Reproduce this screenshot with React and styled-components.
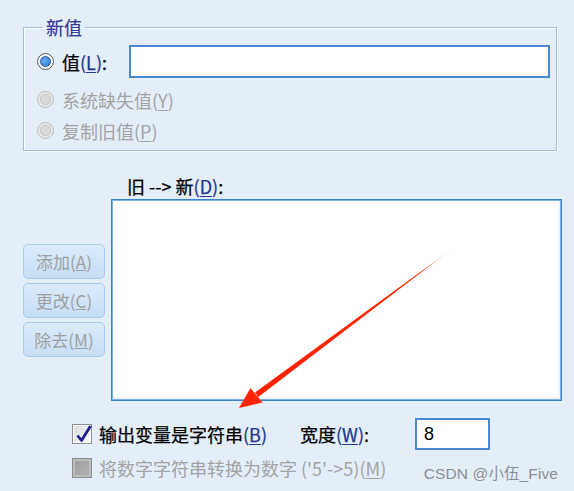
import React from "react";
import styled, { createGlobalStyle } from "styled-components";

const Global = createGlobalStyle`
  html, body { margin: 0; padding: 0; background: #e3eef9; }
  * { box-sizing: border-box; }
`;

const Page = styled.div`
  position: relative;
  width: 574px;
  height: 491px;
  overflow: hidden;
  display: flex;
  flex-direction: column;
  background: #e3eef9;
  font-family: "Noto Sans CJK SC", "Noto Sans", sans-serif;
  font-size: 18px;
  color: #000;
`;

const Group = styled.fieldset`
  margin: 15px 0 0 23px;
  width: 534px;
  min-inline-size: 0;
  padding: 6px 0 4px 13px;
  border: 1px solid #9dbde3;
  box-shadow: inset 1px 1px 0 #fff, 1px 1px 0 #fff;
`;

const Legend = styled.legend`
  margin-left: 6px;
  padding: 0 3px;
  line-height: 24px;
  font-size: 18px;
  color: #34399a;
  -webkit-text-stroke: 0.2px #34399a;
`;

const OptRow = styled.div`
  display: flex;
  align-items: center;
  height: ${(p) => p.$h || 31}px;
  margin-top: ${(p) => p.$mt || 0}px;
`;

const Radio = styled.span`
  flex: none;
  width: 17px;
  height: 17px;
  border-radius: 50%;
  border: 1.5px solid ${(p) => (p.$disabled ? "#bdbdbd" : "#595959")};
  background: ${(p) => (p.$disabled ? "#e6e6e6" : "#f7f7f7")};
  display: grid;
  place-items: center;
  &::after {
    content: "";
    width: 9px;
    height: 9px;
    border-radius: 50%;
    border: 1px solid ${(p) => (p.$checked ? "#2a5e9c" : "#c4c4c4")};
    background: ${(p) =>
      p.$checked
        ? "radial-gradient(circle at 40% 40%, #6cb0f2, #2476d2)"
        : "#dadada"};
  }
`;

const Text = styled.span`
  margin-left: ${(p) => p.$ml ?? 8}px;
  line-height: 24px;
  white-space: nowrap;
  color: ${(p) => (p.$disabled ? "#a3a3a3" : "#000")};
  -webkit-text-stroke: ${(p) => (p.$disabled ? "0" : "0.25px #000")};
  width: ${(p) => (p.$w ? `${p.$w}px` : "auto")};
  flex: none;
`;

const Key = styled.span`
  color: ${(p) => (p.$disabled ? "#a3a3a3" : "#24378a")};
  -webkit-text-stroke: ${(p) => (p.$disabled ? "0" : "0.25px #24378a")};
  & u { text-underline-offset: 2px; text-decoration-thickness: 1px; }
`;

const Field = styled.div`
  flex: none;
  width: ${(p) => p.$w}px;
  height: ${(p) => p.$h}px;
  margin-left: ${(p) => p.$ml || 0}px;
  background: #fff;
  border: 2px solid #4a89d2;
  display: flex;
  align-items: center;
  padding-left: 7px;
  font-family: "Liberation Sans", sans-serif;
  font-size: 18px;
`;

const Middle = styled.div`
  display: grid;
  grid-template-columns: 82px 451px;
  grid-template-rows: 24px 202px;
  column-gap: 6px;
  row-gap: 1px;
  margin: 23px 0 0 23px;
`;

const ListLabel = styled.div`
  grid-column: 2;
  grid-row: 1;
  padding-left: 16px;
  line-height: 24px;
  -webkit-text-stroke: 0.25px #000;
`;

const Buttons = styled.div`
  grid-column: 1;
  grid-row: 2;
  align-self: center;
  display: flex;
  flex-direction: column;
  gap: 4px;
`;

const Btn = styled.div`
  height: 35px;
  border: 1px solid #a8cbee;
  border-radius: 5px;
  background: linear-gradient(#dcebfb, #c6def6);
  color: #9f9f9f;
  font-size: 17px;
  display: flex;
  align-items: center;
  justify-content: center;
`;

const ListBox = styled.div`
  grid-column: 2;
  grid-row: 2;
  background: #fff;
  border: 1px solid #3e7fcf;
  box-shadow: inset 0 0 0 1px #7fb0e6, inset -2px -2px 0 1px #eef4fb;
`;

const Bottom = styled.div`
  display: flex;
  flex-direction: column;
  gap: 6px;
  margin: 17px 0 0 72px;
`;

const CheckRow = styled.div`
  display: flex;
  align-items: center;
  height: ${(p) => p.$h}px;
`;

const Check = styled.span`
  flex: none;
  width: 20px;
  height: 20px;
  position: relative;
  border: 1px solid #8d8d8d;
  background: ${(p) =>
    p.$disabled
      ? "linear-gradient(135deg, #9c9c9c, #b4b4b4)"
      : "linear-gradient(135deg, #d9d9d9, #fbfbfb)"};
  box-shadow: ${(p) =>
    p.$disabled ? "inset 0 0 0 2px #bdbdbd" : "inset 0 0 0 1px #fff"};
  & svg {
    position: absolute;
    left: 1px;
    top: -2px;
  }
`;

const Watermark = styled.div`
  position: absolute;
  right: 16px;
  bottom: 8px;
  font-family: "Liberation Sans", "Noto Sans CJK SC", sans-serif;
  font-size: 15.5px;
  color: #8c8f94;
  letter-spacing: 0.1px;
`;

const Overlay = styled.svg`
  position: absolute;
  left: 0;
  top: 0;
  pointer-events: none;
`;

export default function App() {
  return (
    <Page>
      <Global />
      <Group>
        <Legend>新值</Legend>
        <OptRow $h={33}>
          <Radio $checked />
          <Text $w={67}>
            值<Key>(<u>L</u>)</Key>:
          </Text>
          <Field $w={421} $h={33} />
        </OptRow>
        <OptRow $mt={6}>
          <Radio $disabled />
          <Text $disabled>
            系统缺失值<Key $disabled>(<u>Y</u>)</Key>
          </Text>
        </OptRow>
        <OptRow>
          <Radio $disabled />
          <Text $disabled>
            复制旧值<Key $disabled>(<u>P</u>)</Key>
          </Text>
        </OptRow>
      </Group>

      <Middle>
        <ListLabel>
          旧 --&gt; 新<Key>(<u>D</u>)</Key>:
        </ListLabel>
        <Buttons>
          <Btn>
            添加(<u>A</u>)
          </Btn>
          <Btn>
            更改(<u>C</u>)
          </Btn>
          <Btn>
            除去(<u>M</u>)
          </Btn>
        </Buttons>
        <ListBox />
      </Middle>

      <Bottom>
        <CheckRow $h={32}>
          <Check>
            <svg width="20" height="22" viewBox="0 0 20 22">
              <path
                d="M3.5 12.5 L7.5 17.5 L16.5 3"
                fill="none"
                stroke="#1d1f8f"
                strokeWidth="2.8"
                strokeLinejoin="round"
              />
            </svg>
          </Check>
          <Text $ml={7} $w={201}>
            输出变量是字符串<Key>(<u>B</u>)</Key>
          </Text>
          <Text $ml={0} $w={115}>
            宽度<Key>(<u>W</u>)</Key>:
          </Text>
          <Field $w={75} $h={32}>
            8
          </Field>
        </CheckRow>
        <CheckRow $h={24}>
          <Check $disabled />
          <Text $ml={7} $disabled>
            将数字字符串转换为数字 ('5'-&gt;5)<Key $disabled>(<u>M</u>)</Key>
          </Text>
        </CheckRow>
      </Bottom>

      <Watermark>CSDN @小伍_Five</Watermark>

      <Overlay width="574" height="491" viewBox="0 0 574 491">
        <defs>
          <linearGradient id="fade" x1="453" y1="248" x2="300" y2="362" gradientUnits="userSpaceOnUse">
            <stop offset="0" stopColor="#ff2a00" stopOpacity="0" />
            <stop offset="0.22" stopColor="#ff2a00" stopOpacity="1" />
            <stop offset="1" stopColor="#ff2200" stopOpacity="1" />
          </linearGradient>
        </defs>
        <polygon
          points="453.5,247.7 452.7,248.3 255,392.6 258.3,397"
          fill="url(#fade)"
        />
        <polygon points="239,408 250.5,388 262.5,402.5" fill="#ff2200" />
      </Overlay>
    </Page>
  );
}
